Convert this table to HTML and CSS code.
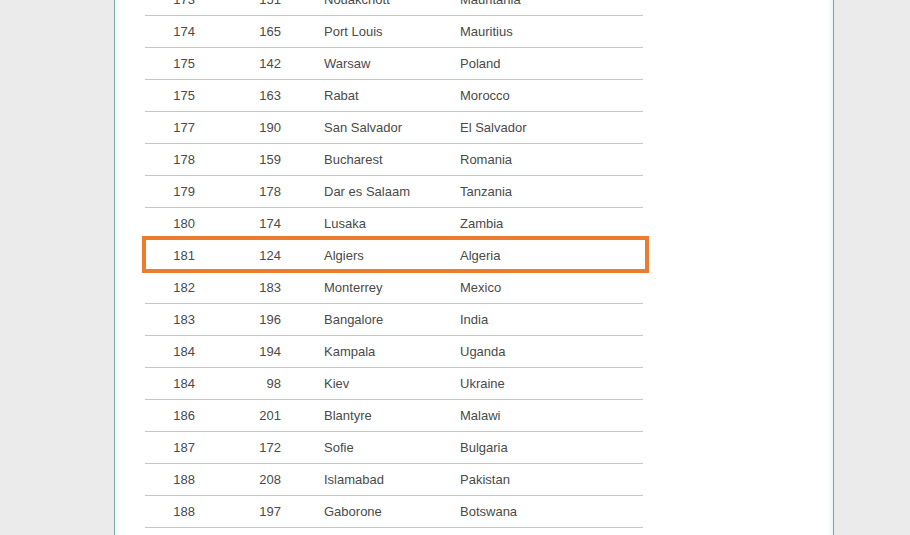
FILE: index.html
```html
<!DOCTYPE html>
<html lang="en">
<head>
    <meta charset="UTF-8">
    <meta name="viewport" content="width=device-width, initial-scale=1.0">
    <title>City ranking</title>
    <link rel="stylesheet" href="styles.css">
</head>
<body>
    <div class="panel">
        <div class="ranking">
            <div class="row"><span class="rank">173</span><span class="prev">151</span><span class="city">Nouakchott</span><span class="country">Mauritania</span></div>
            <div class="row"><span class="rank">174</span><span class="prev">165</span><span class="city">Port Louis</span><span class="country">Mauritius</span></div>
            <div class="row"><span class="rank">175</span><span class="prev">142</span><span class="city">Warsaw</span><span class="country">Poland</span></div>
            <div class="row"><span class="rank">175</span><span class="prev">163</span><span class="city">Rabat</span><span class="country">Morocco</span></div>
            <div class="row"><span class="rank">177</span><span class="prev">190</span><span class="city">San Salvador</span><span class="country">El Salvador</span></div>
            <div class="row"><span class="rank">178</span><span class="prev">159</span><span class="city">Bucharest</span><span class="country">Romania</span></div>
            <div class="row"><span class="rank">179</span><span class="prev">178</span><span class="city">Dar es Salaam</span><span class="country">Tanzania</span></div>
            <div class="row"><span class="rank">180</span><span class="prev">174</span><span class="city">Lusaka</span><span class="country">Zambia</span></div>
            <div class="row highlight"><span class="rank">181</span><span class="prev">124</span><span class="city">Algiers</span><span class="country">Algeria</span></div>
            <div class="row"><span class="rank">182</span><span class="prev">183</span><span class="city">Monterrey</span><span class="country">Mexico</span></div>
            <div class="row"><span class="rank">183</span><span class="prev">196</span><span class="city">Bangalore</span><span class="country">India</span></div>
            <div class="row"><span class="rank">184</span><span class="prev">194</span><span class="city">Kampala</span><span class="country">Uganda</span></div>
            <div class="row"><span class="rank">184</span><span class="prev">98</span><span class="city">Kiev</span><span class="country">Ukraine</span></div>
            <div class="row"><span class="rank">186</span><span class="prev">201</span><span class="city">Blantyre</span><span class="country">Malawi</span></div>
            <div class="row"><span class="rank">187</span><span class="prev">172</span><span class="city">Sofie</span><span class="country">Bulgaria</span></div>
            <div class="row"><span class="rank">188</span><span class="prev">208</span><span class="city">Islamabad</span><span class="country">Pakistan</span></div>
            <div class="row"><span class="rank">188</span><span class="prev">197</span><span class="city">Gaborone</span><span class="country">Botswana</span></div>
        </div>
    </div>
</body>
</html>
```

FILE: styles.css
```css
html, body {
    margin: 0;
    padding: 0;
    height: 535px;
    overflow: hidden;
}
body {
    font-family: 'Liberation Sans', Arial, sans-serif;
    background-color: #ebebeb;
}
.panel {
    margin: -16px 0 0 114px;
    width: 658px;
    min-height: 600px;
    background: white;
    border-left: 1px solid #7aa6ae;
    border-right: 1px solid #7aa6ae;
    padding: 0 30px;
    box-shadow: inset -3px 0 3px #eef7f7, inset 3px 0 3px #eef7f7;
}
.ranking {
    width: 498px;
}
.row {
    position: relative;
    display: grid;
    grid-template-columns: 50px 86px 43px 136px 1fr;
    height: 31px;
    line-height: 31px;
    border-bottom: 1px solid #a8cfe8;
    font-size: 13px;
    color: #4a4a4a;
}
.rank, .prev {
    text-align: right;
}
.city {
    grid-column: 4;
}
.country {
    grid-column: 5;
}
.highlight::after {
    content: "";
    position: absolute;
    left: -3px;
    top: -4px;
    width: 499px;
    height: 29px;
    border: 4px solid #ec7d2e;
}
```
